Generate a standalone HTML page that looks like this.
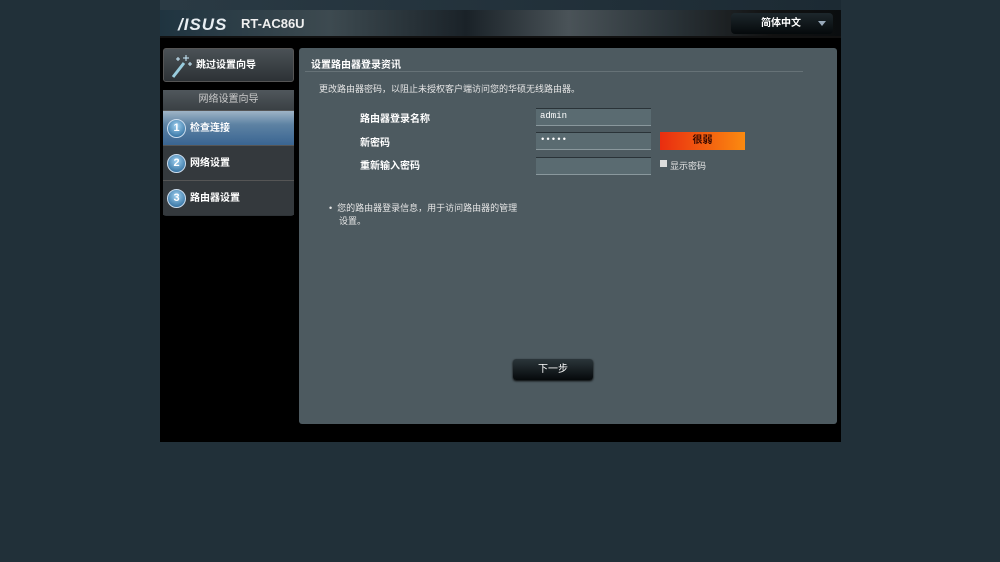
<!DOCTYPE html>
<html><head><meta charset="utf-8"><style>
*{margin:0;padding:0;box-sizing:border-box}
body{width:1000px;height:562px;background:#213039;font-family:"Liberation Sans","Noto Sans CJK SC",sans-serif;position:relative;overflow:hidden;color:#fff}
.wrap{position:absolute;left:160px;top:0;width:681px;height:442px;background:#000}
.top{position:absolute;left:160px;top:0;width:681px;height:10px;background:linear-gradient(90deg,#2a3a44,#1c2a33)}
.hdr{position:absolute;left:160px;top:10px;width:681px;height:28px;background:linear-gradient(90deg,#1f3440 0%,#3d4a50 25%,#1a2228 45%,#4a5358 60%,#2a3338 75%,#111 90%,#0a0d0f 100%);border-bottom:2px solid #111}
.logo{position:absolute;left:178px;top:15px;font:italic bold 17px "Liberation Sans",sans-serif;letter-spacing:1px;color:#e8eef2}
.model{position:absolute;left:241px;top:16px;font:bold 13px "Liberation Sans",sans-serif;color:#f0f0f0}
.lang{position:absolute;left:731px;top:13px;width:102px;height:21px;background:linear-gradient(#1d272c,#05090b);border-radius:4px;font-size:10px;font-weight:bold;line-height:21px;padding-left:30px}
.lang:after{content:"";position:absolute;right:7px;top:8px;border:4px solid transparent;border-top:5px solid #9ab;}
.skip{position:absolute;left:163px;top:48px;width:131px;height:34px;background:linear-gradient(#4a5156,#2d3236);border:1px solid #555;border-radius:3px;font-size:10px;font-weight:bold;line-height:34px;padding-left:32px}
.nav{position:absolute;left:163px;top:90px;width:131px;height:126px;background:#2e3337;border-radius:3px}
.nav .t{height:20px;text-align:center;font-size:10px;line-height:20px;color:#ccc;background:linear-gradient(#50575c,#3a4044)}
.it{height:35px;border-top:1px solid #555;font-size:10px;font-weight:bold;line-height:35px;padding-left:27px;position:relative;background:#34393d}
.it.a{background:linear-gradient(#9fb4c6 0%,#5d82a3 40%,#3a6592 100%)}
.it i{position:absolute;left:4px;top:8px;width:19px;height:19px;border-radius:50%;background:radial-gradient(circle at 50% 35%,#9fd0f0,#1d5d90);border:1px solid #cde;font-style:normal;font-size:11px;line-height:17px;text-align:center}
.panel{position:absolute;left:299px;top:48px;width:538px;height:376px;background:#4d5a60;border-radius:3px}
.ttl{position:absolute;left:311px;top:56px;font-size:10px;font-weight:bold}
.line{position:absolute;left:305px;top:71px;width:498px;height:1px;background:#667277}
.desc{position:absolute;left:319px;top:82px;font-size:9px;color:#e6e6e6}
.lb{position:absolute;left:360px;font-size:10px;font-weight:bold}
.in{position:absolute;left:536px;width:115px;height:18px;background:#5a6b71;border-top:1px solid #2a3338;border-bottom:1px solid #8a989d;font:9px "Liberation Mono",monospace;padding:2px 4px}
.weak{position:absolute;left:660px;top:132px;width:85px;height:18px;background:linear-gradient(90deg,#e92d10,#fb8a10);color:#3a0a00;font-size:10px;font-weight:bold;text-align:center;line-height:18px}
.cb{position:absolute;left:660px;top:160px;width:7px;height:7px;background:#ddd}
.sp{position:absolute;left:670px;top:159px;font-size:9px;color:#e6e6e6}
.note{position:absolute;left:329px;top:202px;font-size:9px;color:#e6e6e6;line-height:13px}
.btn{position:absolute;left:513px;top:359px;width:80px;height:21px;background:linear-gradient(#2b353a,#05090b);border-radius:3px;font-size:10px;text-align:center;line-height:21px;box-shadow:0 1px 2px #000}
</style></head><body>
<div class="wrap"></div><div class="top"></div><div class="hdr"></div>
<div class="logo">/ISUS</div><div class="model">RT-AC86U</div>
<div class="lang">简体中文</div>
<div class="skip"><svg style="position:absolute;left:6px;top:4px" width="24" height="26"><path d="M3 24 L14 10" stroke="#9cd" stroke-width="3"/><path d="M16 2v6M13 5h6M8 4v4M6 6h4M20 9v4M18 11h4" stroke="#cef" stroke-width="1"/></svg>跳过设置向导</div>
<div class="nav"><div class="t">网络设置向导</div>
<div class="it a"><i>1</i>检查连接</div>
<div class="it"><i>2</i>网络设置</div>
<div class="it"><i>3</i>路由器设置</div></div>
<div class="panel"></div>
<div class="ttl">设置路由器登录资讯</div><div class="line"></div>
<div class="desc">更改路由器密码，以阻止未授权客户端访问您的华硕无线路由器。</div>
<div class="lb" style="top:110px">路由器登录名称</div>
<div class="lb" style="top:134px">新密码</div>
<div class="lb" style="top:157px">重新输入密码</div>
<div class="in" style="top:108px">admin</div>
<div class="in" style="top:132px">•••••</div>
<div class="in" style="top:157px"></div>
<div class="weak">很弱</div>
<div class="cb"></div><div class="sp">显示密码</div>
<div class="note">•&nbsp;&nbsp;您的路由器登录信息，用于访问路由器的管理<br>&nbsp;&nbsp;&nbsp;&nbsp;设置。</div>
<div class="btn">下一步</div>
</body></html>
